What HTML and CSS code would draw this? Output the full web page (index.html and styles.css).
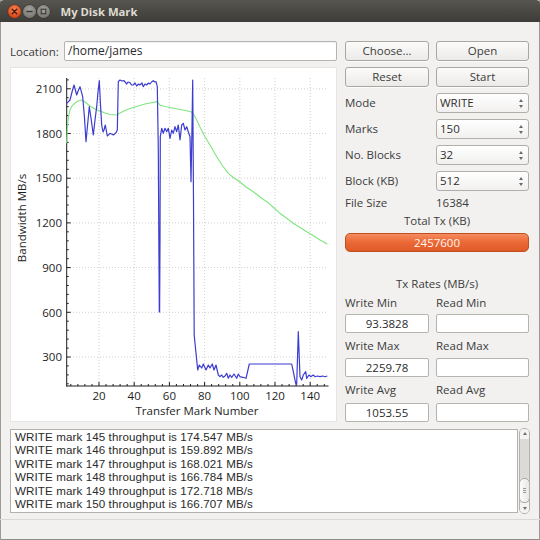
FILE: index.html
```html
<!DOCTYPE html>
<html>
<head>
<meta charset="utf-8">
<title>My Disk Mark</title>
<link rel="stylesheet" href="styles.css">
</head>
<body>
<div class="window">
  <div class="titlebar">
    <span class="wb close"><svg viewBox="0 0 13 13" width="13" height="13"><path d="M4.3 4.3L8.7 8.7M8.7 4.3L4.3 8.7" stroke="#4a1a08" stroke-width="1.4" stroke-linecap="round"/></svg></span>
    <span class="wb gray"><svg viewBox="0 0 13 13" width="13" height="13"><path d="M4 6.5H9" stroke="#3a3935" stroke-width="1.4" stroke-linecap="round"/></svg></span>
    <span class="wb gray"><svg viewBox="0 0 13 13" width="13" height="13"><rect x="4.2" y="4.2" width="4.6" height="4.6" fill="none" stroke="#3a3935" stroke-width="1.1"/></svg></span>
    <span class="title">My Disk Mark</span>
  </div>
  <div class="content">
    <div class="locrow">
      <span class="loclabel">Location:</span>
      <div class="input loc">/home/james</div>
    </div>
    <div class="pair">
      <div class="btn">Choose...</div>
      <div class="btn">Open</div>
    </div>
    <div class="chart">
      <svg class="plot" width="327" height="355" viewBox="10 67 327 355">
        <g class="grid">
          <path d="M67 88.8H328M67 133.5H328M67 178.2H328M67 222.9H328M67 267.6H328M67 312.3H328M67 357H328"/>
          <path d="M99 78V386M134.2 78V386M169.4 78V386M204.6 78V386M239.8 78V386M275 78V386M310.2 78V386"/>
        </g>
        <g class="axis">
          <path d="M66.7 78V386.5M66.2 386H328.5"/>
          <path d="M66.7 88.8h4M66.7 133.5h4M66.7 178.2h4M66.7 222.9h4M66.7 267.6h4M66.7 312.3h4M66.7 357h4"/>
          <path d="M66.7 383.8h2M66.7 374.9h2M66.7 365.9h2M66.7 348.1h2M66.7 339.1h2M66.7 330.2h2M66.7 321.2h2M66.7 303.4h2M66.7 294.4h2M66.7 285.5h2M66.7 276.5h2M66.7 258.7h2M66.7 249.7h2M66.7 240.8h2M66.7 231.8h2M66.7 214h2M66.7 205h2M66.7 196.1h2M66.7 187.1h2M66.7 169.3h2M66.7 160.3h2M66.7 151.4h2M66.7 142.4h2M66.7 124.6h2M66.7 115.6h2M66.7 106.7h2M66.7 97.7h2M66.7 79.9h2"/>
          <path d="M99 386v-4M134.2 386v-4M169.4 386v-4M204.6 386v-4M239.8 386v-4M275 386v-4M310.2 386v-4"/>
          <path d="M70.8 386v-2M77.9 386v-2M84.9 386v-2M92 386v-2M106 386v-2M113.1 386v-2M120.1 386v-2M127.2 386v-2M141.2 386v-2M148.3 386v-2M155.3 386v-2M162.4 386v-2M176.4 386v-2M183.5 386v-2M190.5 386v-2M197.6 386v-2M211.6 386v-2M218.7 386v-2M225.7 386v-2M232.8 386v-2M246.8 386v-2M253.9 386v-2M260.9 386v-2M268 386v-2M282 386v-2M289.1 386v-2M296.1 386v-2M303.2 386v-2M317.2 386v-2M324.3 386v-2"/>
        </g>
        <g class="ylabels">
          <text x="62" y="93">2100</text>
          <text x="62" y="137.7">1800</text>
          <text x="62" y="182.4">1500</text>
          <text x="62" y="227.1">1200</text>
          <text x="62" y="271.8">900</text>
          <text x="62" y="316.5">600</text>
          <text x="62" y="361.2">300</text>
        </g>
        <g class="xlabels">
          <text x="99" y="399.5">20</text>
          <text x="134.2" y="399.5">40</text>
          <text x="169.4" y="399.5">60</text>
          <text x="204.6" y="399.5">80</text>
          <text x="239.8" y="399.5">100</text>
          <text x="275" y="399.5">120</text>
          <text x="310.2" y="399.5">140</text>
        </g>
        <text class="xtitle" x="197" y="415">Transfer Mark Number</text>
        <text class="ytitle" transform="translate(26 218) rotate(-90)">Bandwidth MB/s</text>
        <polyline class="avg" points="66.7,143.3 67.5,125 68.5,117 70,110 72,106 75,103 78,101 81.7,100 85,102 90,106 95,109 100,111 105,113 110,114.5 116.7,115 120,113 125,110.5 130,108.5 135,107 140,105.5 145,104 150,103 156.7,101.7 160,105 165,106.5 170,107.5 175,108.5 180,109.5 185,110.5 190,111.5 192.7,112.7 196.7,120 200,127 205,136.7 210,145 216.7,156.7 222,165 228.3,173.3 234,178 240,182 246,187 253.3,191.7 260,197 266.7,201.7 273,207 280,213.3 287,218.5 293.3,223.3 300,227.5 306.7,231.7 313,235.5 320,240 327.3,244"/>
        <polyline class="bw" points="66.7,103.3 70,100 72,92 74,85 76.7,95 78.5,90 80,86.7 82.7,96.7 84.5,118 86,141.7 89.3,106.7 91,118 93.3,135 95,120 96.7,106.7 98,92 99.3,80.7 100.5,105 101.7,125 103,132 104,130 105.3,125 107.3,136 110,133.3 113.3,135 116,132.7 117.3,130 118.3,81.7 120,80 122,81 124,80.7 126.7,84 128,82 130,82.7 131.5,85 133.3,85 135,83 136.7,86 138.5,84 140,85 142,83 143.3,86.7 145,84 146.7,85 148.5,83 150,84 151.5,82 153.3,80.7 155,82 156,81.7 157.3,86.7 158.3,150 159.3,312 159.6,312 160,240 160.3,136.7 161.7,128.3 163.3,133.3 165,128.3 166.7,131.7 168.3,128.3 170,138.3 171.7,130 173.3,133.3 175,126.7 176.7,131.7 178.3,125 180,140 181.7,125 183.3,123.3 185,130 186.7,126.7 188.3,131.7 190,136.7 191,181.7 192,126.7 192.7,80 193.5,200 194.2,335 195,343.3 197.7,370 199.3,365 201.7,368 203.3,364 206,370 208.3,365 210,368 212.3,364 214,370 216,365 218.3,375 220,376.7 221.7,375 223.3,377.3 225,376 226.7,373.3 228.3,378.3 230,375 231.7,377.3 234,374 236.7,378.3 238.3,374 240,376.7 242.7,377.3 246,378.3 249.3,364 260,364 270,364 280,364 291.7,364 293.3,371.7 295.7,383.3 296.7,384.3 298.3,331.7 300,376.7 301.7,380 303.3,375 305.7,371.7 306.7,378.3 309,375 310.7,376.7 313.3,375 315,376.7 317.3,376 320,376.7 322.7,376 325,376.7 327.3,376"/>
      </svg>
    </div>
    <div class="panel">
      <div class="pair">
        <div class="btn">Reset</div>
        <div class="btn">Start</div>
      </div>
      <div class="pair mt6">
        <span class="lab">Mode</span>
        <div class="combo">WRITE<span class="spin"></span></div>
      </div>
      <div class="pair mt6">
        <span class="lab">Marks</span>
        <div class="combo">150<span class="spin"></span></div>
      </div>
      <div class="pair mt6">
        <span class="lab">No. Blocks</span>
        <div class="combo">32<span class="spin"></span></div>
      </div>
      <div class="pair mt6">
        <span class="lab">Block (KB)</span>
        <div class="combo">512<span class="spin"></span></div>
      </div>
      <div class="pair info mt4">
        <span class="lab">File Size</span>
        <span class="lab val">16384</span>
      </div>
      <div class="centered mt2">Total Tx (KB)</div>
      <div class="bar mt4">2457600</div>
      <div class="centered mt24">Tx Rates (MB/s)</div>
      <div class="pair info mt3">
        <span class="lab">Write Min</span>
        <span class="lab">Read Min</span>
      </div>
      <div class="pair field mt3">
        <div class="input num">93.3828</div>
        <div class="input num"></div>
      </div>
      <div class="pair info mt5">
        <span class="lab">Write Max</span>
        <span class="lab">Read Max</span>
      </div>
      <div class="pair field mt4">
        <div class="input num">2259.78</div>
        <div class="input num"></div>
      </div>
      <div class="pair info mt5">
        <span class="lab">Write Avg</span>
        <span class="lab">Read Avg</span>
      </div>
      <div class="pair field mt5">
        <div class="input num">1053.55</div>
        <div class="input num"></div>
      </div>
    </div>
    <div class="logwrap">
      <div class="log">
        <div class="logline">WRITE mark 145 throughput is 174.547 MB/s</div>
        <div class="logline">WRITE mark 146 throughput is 159.892 MB/s</div>
        <div class="logline">WRITE mark 147 throughput is 168.021 MB/s</div>
        <div class="logline">WRITE mark 148 throughput is 166.784 MB/s</div>
        <div class="logline">WRITE mark 149 throughput is 172.718 MB/s</div>
        <div class="logline">WRITE mark 150 throughput is 166.707 MB/s</div>
      </div>
      <div class="sb">
        <div class="sb-arrow up"></div>
        <div class="sb-track"></div>
        <div class="sb-thumb"><span></span><span></span><span></span></div>
        <div class="sb-arrow down"></div>
      </div>
    </div>
  </div>
  <div class="statusbar"></div>
</div>
</body>
</html>
```
FILE: styles.css
```css
html, body {
  margin: 0;
  padding: 0;
}
body {
  width: 540px;
  height: 540px;
  overflow: hidden;
  background: #f2f1f0;
  font-family: "Open Sans", "Noto Sans", sans-serif;
  font-size: 11.5px;
  color: #3c3c3c;
}
.window {
  width: 540px;
  height: 540px;
  display: flex;
  flex-direction: column;
  background: #f2f1f0;
  box-shadow: inset 1px 0 #9c9a96, inset -1px 0 #9c9a96, inset 0 -1px #8f8d89;
}
.titlebar {
  height: 22px;
  flex: none;
  display: flex;
  align-items: center;
  padding-left: 8px;
  background: linear-gradient(#56554f, #3d3c38);
  border-radius: 4px 4px 0 0;
}
.wb {
  width: 13px;
  height: 13px;
  border-radius: 50%;
  margin-right: 1.5px;
  display: block;
}
.wb svg { display: block; }
.wb.close {
  background: radial-gradient(circle at 50% 35%, #f7875a, #d9481a 70%, #b13a12);
  box-shadow: 0 0 0 0.5px #6e2a10;
}
.wb.gray {
  background: radial-gradient(circle at 50% 35%, #a3a29d, #7c7b76 70%, #65645f);
  box-shadow: 0 0 0 0.5px #34332f;
}
.title {
  margin-left: 9px;
  color: #dfdbd2;
  font-weight: bold;
  font-size: 11.3px;
}
.content {
  display: grid;
  grid-template-columns: 327px 184px;
  grid-template-rows: 20px 355px 84px;
  column-gap: 8px;
  row-gap: 6px;
  padding: 19px 0 0 10px;
}
.locrow {
  display: flex;
  align-items: center;
}
.loclabel {
  width: 54px;
  flex: none;
}
.input {
  background: #fff;
  border: 1px solid #b6b4b0;
  border-radius: 2px;
  box-sizing: border-box;
  height: 20px;
  line-height: 18px;
  color: #2b2b2b;
}
.input.loc {
  flex: 1;
  padding-left: 3px;
  font-size: 12px;
  box-shadow: inset 0 1px 1px rgba(0,0,0,0.06);
}
.pair {
  display: grid;
  grid-template-columns: 84px 93px;
  column-gap: 7px;
  height: 20px;
}
.btn {
  box-sizing: border-box;
  height: 20px;
  border: 1px solid #aaa7a2;
  border-radius: 3px;
  background: linear-gradient(#fbfbfa, #ebeae8);
  text-align: center;
  line-height: 18px;
  color: #3c3c3c;
  box-shadow: 0 1px 0 rgba(255,255,255,0.8);
}
.panel {
  display: flex;
  flex-direction: column;
}
.lab {
  line-height: 20px;
  white-space: nowrap;
}
.info { height: 16px; }
.info .lab { line-height: 16px; }
.field { height: 19px; }
.field .input { height: 19px; line-height: 17px; }
.combo {
  position: relative;
  box-sizing: border-box;
  height: 20px;
  border: 1px solid #b2afaa;
  border-radius: 3px;
  background: linear-gradient(#ffffff, #f1f0ef);
  padding-left: 3px;
  line-height: 18px;
  color: #2f2f2f;
}
.spin::before, .spin::after {
  content: "";
  position: absolute;
  right: 5px;
  border-left: 2px solid transparent;
  border-right: 2px solid transparent;
}
.spin::before {
  top: 5px;
  border-bottom: 3px solid #6a6a6a;
}
.spin::after {
  top: 11px;
  border-top: 3px solid #6a6a6a;
}
.centered {
  height: 16px;
  line-height: 16px;
  text-align: center;
}
.bar {
  height: 19px;
  box-sizing: border-box;
  border: 1px solid #c0501f;
  border-radius: 5px;
  background: linear-gradient(#f58c60, #eb6a38 45%, #e05a27);
  color: #fff4ee;
  text-align: center;
  line-height: 17px;
}
.num { text-align: center; }
.mt2 { margin-top: 2px; }
.mt3 { margin-top: 3px; }
.mt4 { margin-top: 4px; }
.mt5 { margin-top: 5px; }
.mt6 { margin-top: 6px; }
.mt24 { margin-top: 24px; }
.chart {
  background: #fff;
  box-shadow: inset 0 0 0 1px #e6e5e3;
}
.plot { display: block; }
.grid path {
  fill: none;
  stroke: #c4c4c4;
  stroke-width: 0.8;
  stroke-dasharray: 1 2;
}
.axis path {
  fill: none;
  stroke: #1e1e1e;
  stroke-width: 1;
}
.plot text {
  font-family: "Open Sans", "Noto Sans", sans-serif;
  font-size: 11.5px;
  fill: #1e1e1e;
}
.ylabels text { text-anchor: end; }
.xlabels text, .xtitle, .ytitle { text-anchor: middle; }
.avg {
  fill: none;
  stroke: #7fe57f;
  stroke-width: 1.1;
}
.bw {
  fill: none;
  stroke: #3c3cd0;
  stroke-width: 1.2;
  stroke-linejoin: round;
}
.logwrap {
  grid-column: 1 / -1;
  margin-top: 1px;
  height: 84px;
  display: flex;
  margin-right: -1px;
}
.log {
  flex: 1;
  background: #fff;
  border: 1px solid #b3b1ad;
  box-sizing: border-box;
  padding: 0 0 0 4px;
  font-family: "Liberation Sans", Arial, sans-serif;
  font-size: 11.6px;
  letter-spacing: 0.1px;
  color: #2a2a2a;
  overflow: hidden;
}
.logline {
  height: 13.4px;
  line-height: 13.4px;
  white-space: nowrap;
}
.sb {
  width: 11px;
  margin: -1px 0 -1px 1px;
  box-sizing: border-box;
  border: 1px solid #b5b3af;
  border-radius: 5px;
  background: #e6e4e1;
  display: flex;
  flex-direction: column;
  overflow: hidden;
}
.sb-arrow {
  height: 10px;
  flex: none;
  position: relative;
  background: #f4f3f2;
}
.sb-arrow::after {
  content: "";
  position: absolute;
  left: 2.5px;
  border-left: 2px solid transparent;
  border-right: 2px solid transparent;
}
.sb-arrow.up::after { top: 3px; border-bottom: 3px solid #6f6f6f; }
.sb-arrow.down::after { top: 4px; border-top: 3px solid #6f6f6f; }
.sb-track {
  flex: 1;
  background: #dcdad7;
}
.sb-thumb {
  height: 25px;
  flex: none;
  box-sizing: border-box;
  border: 1px solid #a9a7a3;
  border-radius: 5px;
  background: linear-gradient(90deg, #fbfbfa, #e9e8e6);
  display: flex;
  flex-direction: column;
  align-items: center;
  justify-content: center;
  gap: 1px;
  margin: 0 -1px;
}
.sb-thumb span {
  width: 3px;
  height: 1px;
  background: #9a9893;
}
.statusbar {
  flex: 1;
  margin-top: 7px;
  border-top: 1px solid #dad8d5;
}
```
